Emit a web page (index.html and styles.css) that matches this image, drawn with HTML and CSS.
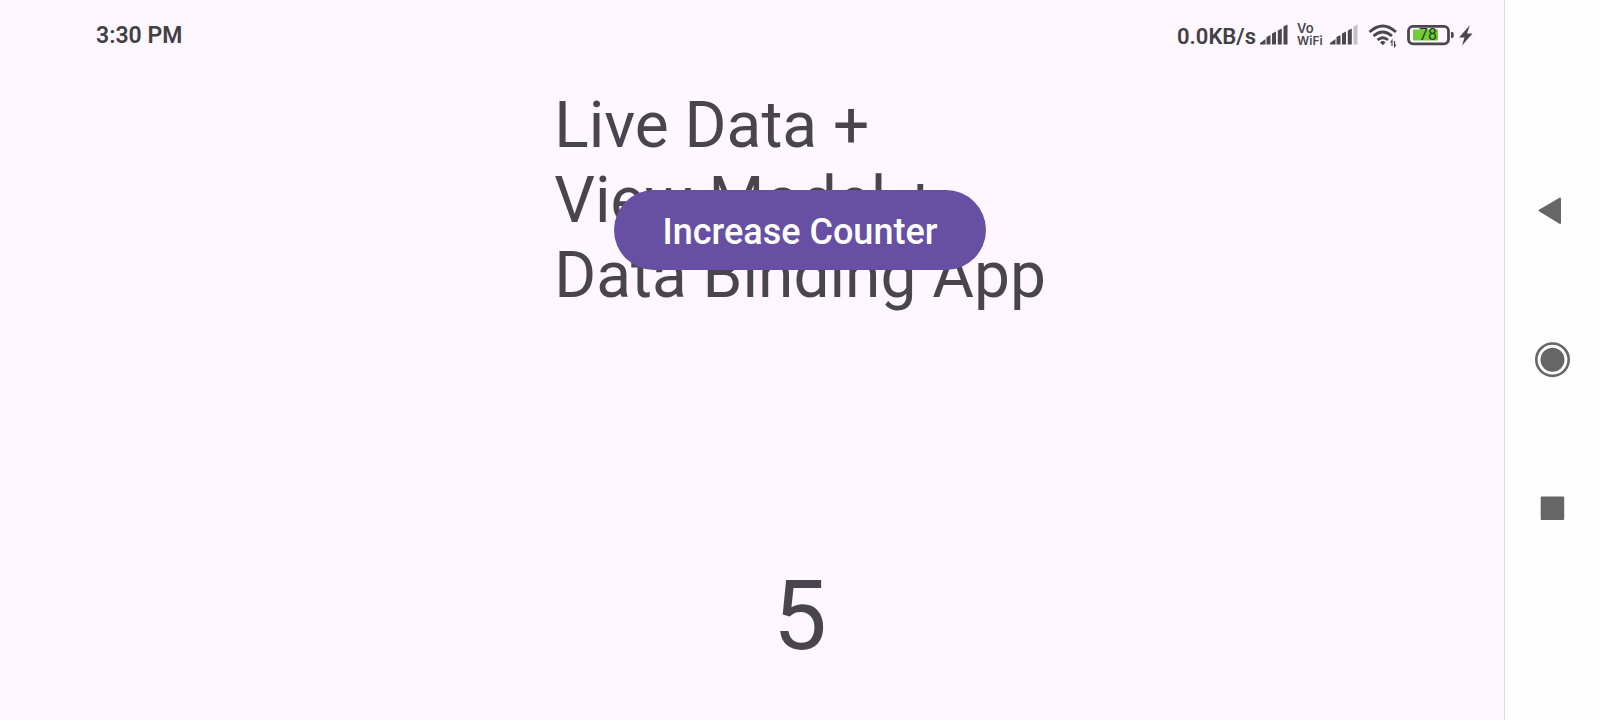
FILE: index.html
```html
<!DOCTYPE html>
<html lang="en">
<head>
<meta charset="utf-8">
<meta name="viewport" content="width=device-width, initial-scale=1">
<title>Live Data + View Model + Data Binding App</title>
<link rel="stylesheet" href="styles.css">
</head>
<body>
<div class="app">
  <header class="status">
    <span class="time">3:30 PM</span>
    <div class="indicators">
      <span class="speed">0.0KB/s</span>
      <svg class="icon" width="220" height="32" viewBox="1258 19 220 32" role="img" aria-label="Signal, Wi-Fi and battery">
        <g fill="#4b484d">
          <path d="M1260 44.500v-1.500l5.500-4v5.500zM1266.500 37l4-2v9.500h-4zM1272 33.500l4-2v13h-4zM1277.800 30.500l4-2v16h-4zM1283.500 26.500l4-2v20h-4z"/>
          <path d="M1330 44.500v-1.500l5.500-4v5.500zM1336.500 37l4-2v9.500h-4zM1342 33.500l4-2v13h-4zM1347.800 30.500l4-2v16h-4z"/>
          <path fill="#c5c0c7" d="M1353.500 26.500l4-2v20h-4z"/>
          <path d="M1380 42.300q2.800-2.500 5.600 0l-2.800 3zM1470 25L1459 37.500h5.500l-2.500 8L1472.500 33.500h-5.500z"/>
          <path d="M1451 32h1q1.700 0 1.700 1.700v2.600q0 1.700-1.700 1.700h-1z"/>
        </g>
        <g fill="none" stroke="#4b484d" stroke-width="2.800">
          <path d="M1369.500 32q13.200-12 26.500 0M1373.500 36q9.200-8 18.500 0M1377.500 40q5.300-4.500 10.500 0"/>
          <rect x="1408.500" y="26.300" width="40" height="17.500" rx="4.500"/>
        </g>
        <path d="M1392 46v-5.500l-1.500 2M1394.500 41v5.500l1.500-2" fill="none" stroke="#4b484d" stroke-width="1.200"/>
        <rect x="1413" y="29.500" width="25" height="11" rx="1" fill="#6fce39"/>
        <text class="vo" x="1297" y="33">Vo</text>
        <text class="wifi" x="1297" y="45">WiFi</text>
        <text class="level" x="1428" y="40" text-anchor="middle">78</text>
      </svg>
    </div>
  </header>
  <main class="content">
    <div class="hero">
      <h1 class="title">Live Data +<br>View Model +<br>Data Binding App</h1>
      <button class="increase" type="button">Increase Counter</button>
    </div>
    <output class="counter">5</output>
  </main>
</div>
<nav class="navbar" aria-label="System navigation">
  <button class="nav-button" type="button" aria-label="Back">
    <svg width="36" height="36" viewBox="0 0 36 36"><path d="M4.500 16.500L25 4.500V29z" fill="#666" stroke="#666" stroke-width="2" stroke-linejoin="round"/></svg>
  </button>
  <button class="nav-button" type="button" aria-label="Home">
    <svg width="36" height="36" viewBox="0 0 36 36"><circle cx="17.500" cy="17.700" r="16.200" fill="none" stroke="#666" stroke-width="2.600"/><circle cx="17.500" cy="17.700" r="12" fill="#666"/></svg>
  </button>
  <button class="nav-button" type="button" aria-label="Recent apps">
    <svg width="36" height="36" viewBox="0 0 36 36"><rect x="5.700" y="6.500" width="23.500" height="23.500" rx="1" fill="#666"/></svg>
  </button>
</nav>
</body>
</html>
```
FILE: styles.css
```css
* {
  box-sizing: border-box;
}

body {
  margin: 0;
  min-height: 100vh;
  display: flex;
  font-family: Roboto, "Liberation Sans", sans-serif;
  color: #49454f;
  background: #fef7ff;
}

.app {
  flex: 1;
  display: flex;
  flex-direction: column;
}

.status {
  display: flex;
  justify-content: space-between;
  align-items: center;
  height: 70px;
  padding: 0 26px 0 96px;
  color: #434045;
  font-weight: 600;
}

.time {
  font-size: 23px;
}

.indicators {
  display: flex;
  align-items: center;
  gap: 2px;
}

.speed {
  padding-top: 2px;
  font-size: 22px;
}

.icon {
  display: block;
}

.vo,
.wifi {
  font-family: Inter, Roboto, sans-serif;
  font-size: 12px;
  font-weight: 600;
  fill: #4b484d;
}

.vo {
  font-size: 13px;
}

.level {
  font-size: 16px;
  font-weight: 400;
  fill: #24401a;
}

.content {
  flex: 1;
  display: flex;
  flex-direction: column;
  justify-content: space-between;
  align-items: center;
  padding: 18px 0 48px 96px;
}

.hero {
  display: grid;
  justify-items: center;
}

.title,
.increase {
  grid-area: 1 / 1;
}

.title {
  margin: 0;
  font-size: 64px;
  font-weight: 400;
  line-height: 75px;
}

.increase {
  align-self: start;
  height: 80px;
  margin-top: 102px;
  padding: 4px 49px 0;
  border: 0;
  border-radius: 40px;
  background: #6750a4;
  color: #fff;
  font-family: inherit;
  font-size: 36px;
  font-weight: 500;
  line-height: 42px;
}

.counter {
  font-size: 96px;
  line-height: 112px;
}

.navbar {
  flex: none;
  width: 96px;
  display: flex;
  flex-direction: column;
  justify-content: center;
  gap: 112px;
  border-left: 1px solid #dddadf;
  background: #fefefe;
}

.nav-button {
  display: flex;
  justify-content: center;
  padding: 0;
  border: 0;
  background: none;
}
```
